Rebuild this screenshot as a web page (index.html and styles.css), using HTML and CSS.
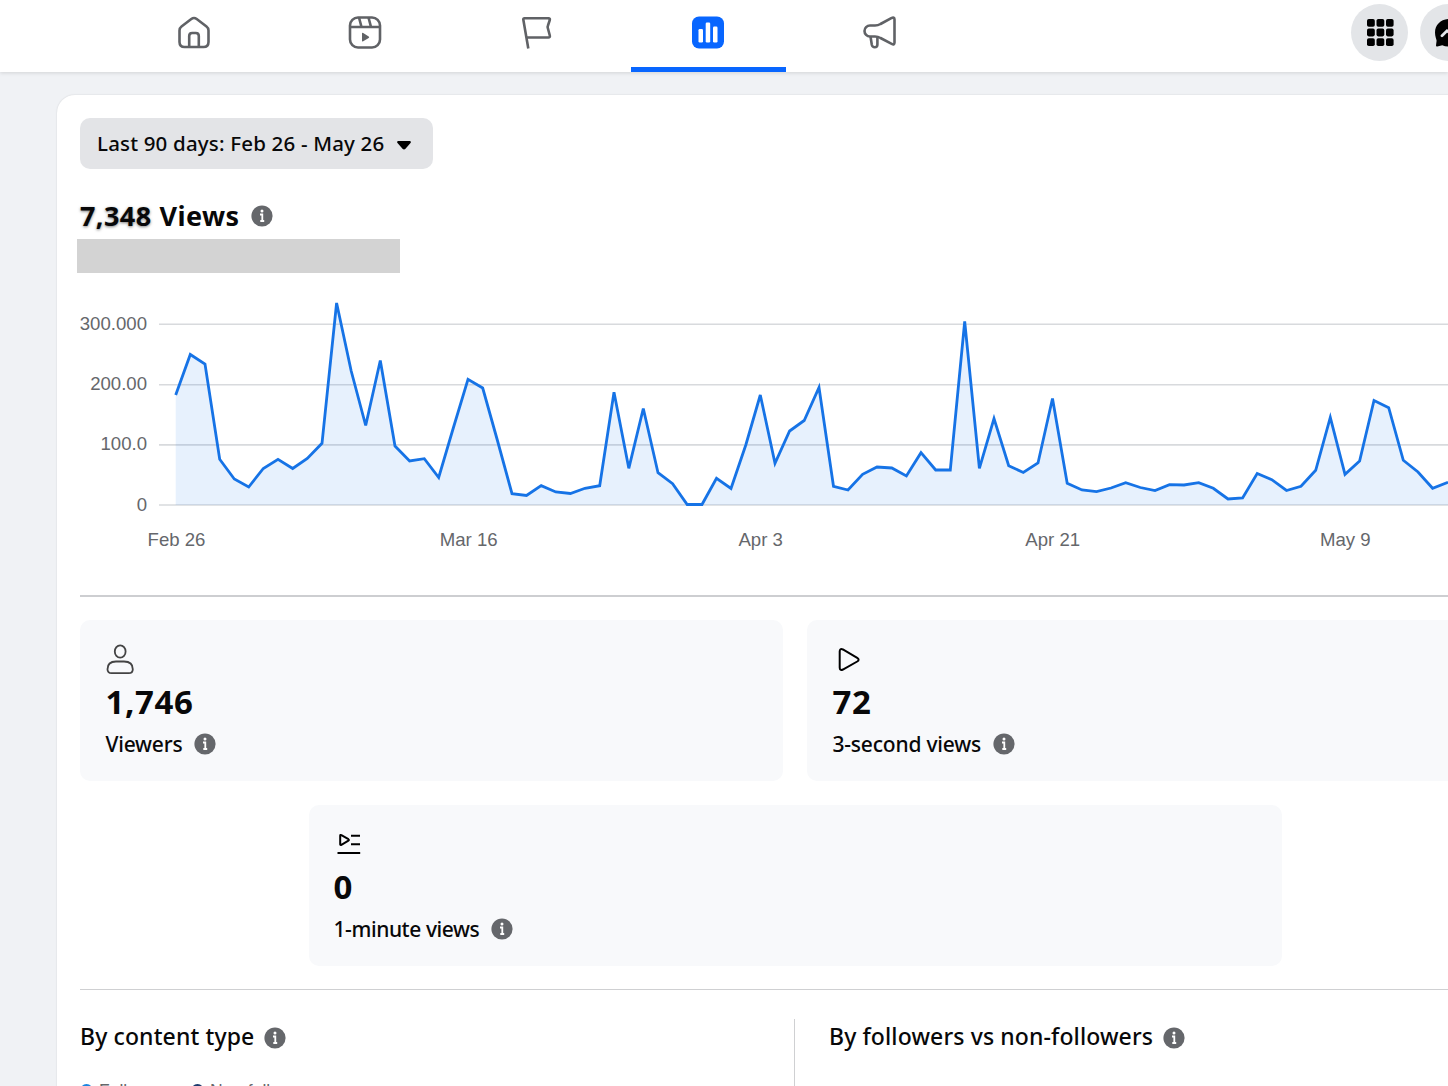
FILE: index.html
```html
<!DOCTYPE html>
<html lang="en">
	<head>
		<meta charset="UTF-8">
		<title>Insights</title>
		<link rel="stylesheet" href="styles.css">
	</head>
	<body>
		<svg class="defs" width="0" height="0">
			<symbol id="info" viewBox="0 0 22 22">
				<circle cx="11" cy="11" r="10.6" fill="#65676b"/>
				<circle cx="11" cy="6" r="1.5" fill="#fff"/>
				<path d="M9 9.500h2.300v6.500M9.300 16h3.900" fill="none" stroke="#fff" stroke-width="1.800"/>
			</symbol>
		</svg>
		<header class="topbar">
			<nav class="tabs">
				<a class="tab">
					<svg width="36" height="36" viewBox="0 0 36 36">
						<path d="M3.5 15.500q0-2.500 2-4L15.300 4q2.700-2 5.400 0l9.800 7.500q2 1.500 2 4V27q0 5-5 5h-19q-5 0-5-5z"/>
						<path d="M13.200 32V21q0-3 3-3h3.600q3 0 3 3v11"/>
					</svg>
				</a>
				<a class="tab">
					<svg width="36" height="36" viewBox="0 0 36 36">
						<rect x="3" y="2.500" width="30" height="30" rx="8"/>
						<path d="M3 12h30M12 2.500l2.500 9.500M21.500 2.500L24 12"/>
						<path class="solid" d="M15 18.500v7.200q0 1.200 1.200.6l5.500-3.400q1-.7 0-1.400l-5.500-3.500q-1.200-.6-1.200.5z"/>
					</svg>
				</a>
				<a class="tab">
					<svg width="36" height="36" viewBox="0 0 36 36">
						<path d="M9.300 33.500L4.300 4.500q-.2-1.300 1.200-1.300h24q1.800 0 1.300 1.800l-2 6q-.4 1 0 2l2 7.500q.5 2-1.500 2H8"/>
					</svg>
				</a>
				<a class="tab active">
					<svg width="36" height="36" viewBox="0 0 36 36">
						<rect class="blue" x="2" y="1.500" width="32" height="32" rx="7"/>
						<rect class="bar" x="8.500" y="14" width="4.500" height="13.500" rx="1.200"/>
						<rect class="bar" x="15.700" y="7.500" width="4.500" height="20" rx="1.200"/>
						<rect class="bar" x="23" y="11.500" width="4.500" height="16" rx="1.200"/>
					</svg>
				</a>
				<a class="tab">
					<svg width="36" height="36" viewBox="0 0 36 36">
						<path d="M8 10.500h5q3 0 5.500-1.500l10.800-5.900q3.200-1.400 3.200 1.400v23q0 2.800-2.800 1.400L18.500 23q-2.500-1.500-5.500-1.500H8a5.500 5.500 0 0 1 0-11z"/>
						<path d="M8.500 21.500l1.300 8.300q.6 2.500 2.900 2.500 2.700 0 2.700-2.800v-7.500"/>
					</svg>
				</a>
			</nav>
			<div class="actions">
				<a class="round">
					<svg width="28" height="28" viewBox="0 0 28 28">
						<g id="dots">
							<rect x="1" y="0" width="7.800" height="7.800" rx="1.800"/>
							<rect x="10.500" y="0" width="7.800" height="7.800" rx="1.800"/>
							<rect x="20" y="0" width="7.600" height="7.800" rx="1.800"/>
						</g>
						<use href="#dots" y="9.600"/>
						<use href="#dots" y="19.200"/>
					</svg>
				</a>
				<a class="round">
					<svg width="28" height="28" viewBox="0 0 28 28">
						<path d="M14 0C6 0 0 5.800 0 13.400c0 4 1.400 6.500 1.600 8.300L1 26.500q0 1.300 1.300 1l5-1.300q3 1.300 6.700 1.300c8 0 14-6 14-14S22 0 14 0z"/>
						<path d="M7 16.800l5-5 4 3 5-4.500" fill="none" stroke="#e4e6eb" stroke-width="2.800" stroke-linecap="round"/>
					</svg>
				</a>
			</div>
		</header>

		<main class="card">
			<button class="range">Last 90 days: Feb 26 - May 26
				<svg width="14" height="9" viewBox="0 0 14 9"><path d="M1 0h12q1.500.5.500 2L8.500 7.800q-1.500 1.400-3 0L.5 2Q-.5.500 1 0z"/></svg>
			</button>
			<h1><span class="soft">7,348</span> <span>Views</span><svg class="info"><use href="#info"/></svg></h1>
			<div class="mask"></div>

			<svg class="chart" width="1368" height="270" viewBox="80 290 1368 270">
				<path class="grid" d="M159 324.300h1289M159 384.700h1289M159 444.900h1289M159 505h1289"/>
				<path class="area" d="M175.700 505V395L190.300 354.500 205 364 219.700 459.300 234.300 479 248.700 487 263.300 468.500 278 459.300 292.700 468.500 307.300 458.500 322 443.300 336.600 303 351.200 371 365.700 425.500 380.300 360.500 395 446 409.600 461 424.300 458.700 438.700 477.500 453.300 428 468 379.300 482.700 388 497.300 440 512 493.700 526.500 495.500 541.200 485.700 555.800 492 570.400 493.500 585 488.300 599.700 485.700 614 392.300 628.800 468.300 643.300 408.500 658 472.700 672.600 483.700 687.200 504.500 702 504.500 716.500 478.300 731 488.500 745.800 445 760.300 395 775 463.300 789.600 431 804.200 420.500 819 387.500 833.500 486.300 848 490 862.600 474.300 877 467 891.800 468 906.400 476 921 452.700 935.700 470 950.300 470 964.700 321.500 979.400 468.300 994 418.500 1008.700 465.700 1023.300 472.500 1038 463 1052.500 398.500 1067.200 483.300 1082 490 1096.500 491.700 1111 488 1125.700 482.700 1140.300 487.500 1155 490.500 1169.500 484.700 1184 485 1198.700 482.700 1213.300 488.300 1228 499 1242.600 498 1257.200 473.500 1271.800 479.700 1286.500 490.500 1301 486.300 1315.700 470.300 1330.300 417.500 1345 474.300 1359.600 461 1374 400.500 1388.700 407.700 1403.300 460.300 1418 472 1432.600 488.300 1448 482.300V505z"/>
				<polyline class="line" points="175.700,395 190.300,354.500 205,364 219.700,459.300 234.300,479 248.700,487 263.300,468.500 278,459.300 292.700,468.500 307.300,458.500 322,443.300 336.600,303 351.200,371 365.700,425.500 380.300,360.500 395,446 409.600,461 424.300,458.700 438.700,477.500 453.300,428 468,379.300 482.700,388 497.300,440 512,493.700 526.500,495.500 541.200,485.700 555.800,492 570.400,493.500 585,488.300 599.700,485.700 614,392.300 628.800,468.300 643.300,408.500 658,472.700 672.600,483.700 687.200,504.500 702,504.500 716.500,478.300 731,488.500 745.800,445 760.300,395 775,463.300 789.600,431 804.200,420.500 819,387.500 833.500,486.300 848,490 862.600,474.300 877,467 891.800,468 906.400,476 921,452.700 935.700,470 950.300,470 964.700,321.500 979.400,468.300 994,418.500 1008.700,465.700 1023.300,472.500 1038,463 1052.500,398.500 1067.200,483.300 1082,490 1096.500,491.700 1111,488 1125.700,482.700 1140.300,487.500 1155,490.500 1169.500,484.700 1184,485 1198.700,482.700 1213.300,488.300 1228,499 1242.600,498 1257.200,473.500 1271.800,479.700 1286.500,490.500 1301,486.300 1315.700,470.300 1330.300,417.500 1345,474.300 1359.600,461 1374,400.500 1388.700,407.700 1403.300,460.300 1418,472 1432.600,488.300 1448,482.300"/>
				<g class="ylabels">
					<text x="147" y="330">300.000</text>
					<text x="147" y="390">200.00</text>
					<text x="147" y="450">100.0</text>
					<text x="147" y="511">0</text>
				</g>
				<g class="xlabels">
					<text x="176.500" y="546">Feb 26</text>
					<text x="468.700" y="546">Mar 16</text>
					<text x="760.700" y="546">Apr 3</text>
					<text x="1052.700" y="546">Apr 21</text>
					<text x="1345.300" y="546">May 9</text>
				</g>
			</svg>

			<div class="tiles">
				<section class="tile">
					<svg class="icon" width="30" height="32" viewBox="0 0 30 32">
						<g fill="none" stroke="#444" stroke-width="1.800">
							<ellipse cx="14.200" cy="7.500" rx="5.400" ry="6.200"/>
							<path d="M5.500 29.200q-4 0-4-4 0-7.700 8.500-7.700h8q8.800 0 8.800 7.700 0 4-4 4z"/>
						</g>
					</svg>
					<strong>1,746</strong>
					<p>Viewers<svg class="info"><use href="#info"/></svg></p>
				</section>
				<section class="tile">
					<svg class="icon" width="30" height="32" viewBox="0 0 30 32">
						<path d="M6.700 7.500v16q0 3.500 3.200 2l14.300-8q2.800-1.800 0-3.600L9.900 5.500q-3.200-1.500-3.200 2z" fill="none" stroke="#000" stroke-width="2"/>
					</svg>
					<strong>72</strong>
					<p>3-second views<svg class="info"><use href="#info"/></svg></p>
				</section>
				<section class="tile wide">
					<svg class="icon" width="30" height="32" viewBox="0 0 30 32">
						<path d="M6.200 6.700v8.500q0 1.200 1.200.6l7-4.200q1-.7 0-1.400l-7-4.100q-1.200-.6-1.200.6zM17 6.700h9M17 15.200h9M3.500 24h22.700" fill="none" stroke="#000" stroke-width="2"/>
					</svg>
					<strong>0</strong>
					<p>1-minute views<svg class="info"><use href="#info"/></svg></p>
				</section>
			</div>

			<div class="breakdown">
				<section class="by">
					<h2>By content type<svg class="info"><use href="#info"/></svg></h2>
					<ul class="legend">
						<li class="followers">Followers</li>
						<li class="non">Non-followers</li>
					</ul>
				</section>
				<section class="by">
					<h2>By followers vs non-followers<svg class="info"><use href="#info"/></svg></h2>
				</section>
			</div>
		</main>
	</body>
</html>
```
FILE: styles.css
```css
*{
	box-sizing: border-box;
}
html{
	overflow: hidden;
}
body{
	margin: 0;
	width: 1448px;
	height: 1086px;
	overflow: hidden;
	background: #f0f2f5;
	color: #080809;
	font-family: "Noto Sans", "Open Sans", sans-serif;
}
h1, h2, p, ul{
	margin: 0;
	padding: 0;
}
svg{
	display: block;
	flex: none;
}
.defs{
	height: 0;
}
.topbar{
	display: flex;
	justify-content: space-between;
	height: 72px;
	padding-left: 116px;
	background: #fff;
	box-shadow: 0 1px 4px rgba(0,0,0,.13);
}
.tabs{
	display: flex;
	gap: 16.600px;
}
.tab{
	width: 155px;
	height: 72px;
	padding-top: 14.500px;
	display: flex;
	justify-content: center;
}
.tab svg{
	fill: none;
	stroke: #606266;
	stroke-width: 2.600;
	stroke-linejoin: round;
}
.tab .solid{
	fill: #606266;
	stroke: none;
}
.tab .blue{
	fill: #0866ff;
	stroke: none;
}
.tab .bar{
	fill: #fff;
	stroke: none;
}
.active{
	border-bottom: 5px solid #0866ff;
}
.actions{
	display: flex;
	gap: 12px;
	padding-top: 4px;
	margin-right: -29px;
}
.round{
	width: 57px;
	height: 57px;
	border-radius: 50%;
	background: #e3e5e8;
	display: flex;
	align-items: center;
	justify-content: center;
}
.card{
	width: 1476px;
	height: 1100px;
	margin: 23px 0 0 57px;
	padding: 23px;
	background: #fff;
	border-radius: 18px;
	box-shadow: 0 0 2px rgba(0,0,0,.14);
}
.range{
	display: flex;
	align-items: center;
	gap: 13px;
	width: 353px;
	height: 51px;
	padding: 0 17px 2px;
	border: 0;
	border-radius: 10px;
	background: #e3e4e7;
	color: #080809;
	font: 500 20.500px "Noto Sans", sans-serif;
	letter-spacing: .18px;
	white-space: nowrap;
}
.range svg{
	margin-top: 5px;
}
.info{
	width: 22px;
	height: 22px;
	margin-left: 12px;
}
h1{
	display: flex;
	align-items: center;
	height: 38px;
	margin-top: 27px;
	font-size: 27px;
	font-weight: 700;
	letter-spacing: .4px;
}
h1 .info{
	margin-top: 2px;
}
h1 .soft{
	margin-right: 8px;
	text-shadow: 0 1px 3px rgba(0,0,0,.5);
}
.mask{
	width: 323px;
	height: 33.500px;
	margin: 5px 0 0 -3.500px;
	background: #d3d3d3;
}
.chart{
	margin-top: 17.500px;
}
.grid{
	stroke: #d8dadd;
	stroke-width: 1.600;
}
.area{
	fill: #1876e8;
	fill-opacity: .1;
}
.line{
	fill: none;
	stroke: #1673e6;
	stroke-width: 2.800;
}
.ylabels, .xlabels{
	fill: #65676b;
	font-family: "Liberation Sans", Arial, sans-serif;
	font-size: 18.600px;
}
.ylabels{
	text-anchor: end;
}
.xlabels{
	text-anchor: middle;
}
.tiles{
	display: flex;
	flex-wrap: wrap;
	justify-content: center;
	gap: 24px;
	margin-top: 35px;
	padding: 23px 0;
	border-top: 2px solid #cdced1;
	border-bottom: 1px solid #cfd0d2;
}
.tile{
	width: 703px;
	height: 161px;
	padding: 24px 25.500px;
	border-radius: 10px;
	background: #f8f9fb;
}
.wide{
	width: 973px;
	padding-left: 25px;
}
.tile strong{
	display: block;
	margin-top: 4px;
	font-size: 33px;
	line-height: 44px;
	letter-spacing: .6px;
}
.tile p{
	display: flex;
	align-items: center;
	height: 30px;
	margin-top: 5px;
	font-size: 21px;
	font-weight: 500;
	letter-spacing: -.2px;
}
.wide p{
	letter-spacing: -.42px;
}
.breakdown{
	display: flex;
	margin-top: 29px;
}
.by{
	width: 714px;
	height: 160px;
}
.by + .by{
	border-left: 1px solid #cfd0d2;
	padding-left: 34px;
}
h2{
	display: flex;
	align-items: center;
	height: 34px;
	font-size: 23px;
	font-weight: 500;
	letter-spacing: .12px;
}
h2 .info{
	margin: 4px 0 0 10px;
}
.legend{
	display: flex;
	gap: 17px;
	margin-top: 27px;
	list-style: none;
	color: #65676b;
	font: 17.500px/22px "Liberation Sans", Arial, sans-serif;
}
.legend li{
	display: flex;
	align-items: center;
	gap: 6px;
}
.legend li::before{
	content: "";
	width: 13px;
	height: 13px;
	margin-bottom: 2px;
	border-radius: 50%;
	background: #1b85e0;
}
.legend .non::before{
	background: #1c3a6e;
}
```
